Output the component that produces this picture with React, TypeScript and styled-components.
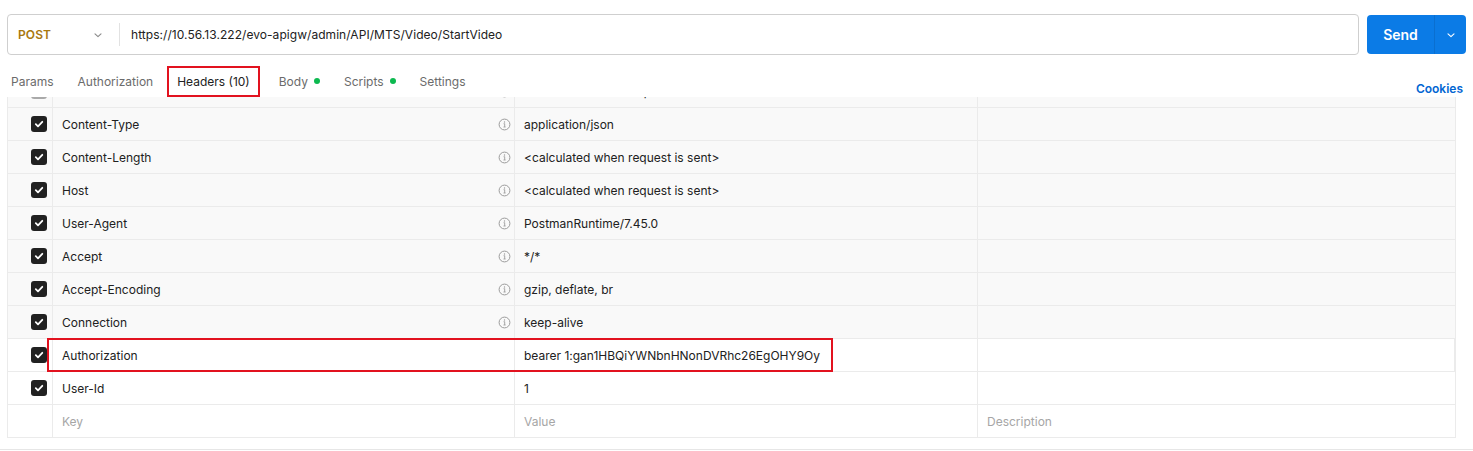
import React, { useLayoutEffect, useRef } from "react";
import styled, { createGlobalStyle } from "styled-components";

const Global = createGlobalStyle`
  html, body { margin: 0; padding: 0; background: #fff; }
  body { font-family: Inter, "Noto Sans", "Liberation Sans", sans-serif; color: #212121; -webkit-font-smoothing: antialiased; }
  * { box-sizing: border-box; }
`;

const Page = styled.div`
  width: 1473px;
  height: 451px;
  overflow: hidden;
  background: #fff;
  display: flex;
  flex-direction: column;
`;

const TopBar = styled.div`
  display: flex;
  align-items: center;
  gap: 8px;
  padding: 14px 7px 0 7px;
`;

const UrlBox = styled.div`
  flex: 1;
  height: 41px;
  border: 1px solid #cfcfcf;
  border-radius: 4px;
  display: flex;
  align-items: center;
`;

const Method = styled.div`
  width: 111px;
  padding-left: 10px;
  display: flex;
  align-items: center;
  justify-content: space-between;
  padding-right: 16px;
  font-size: 12px;
  font-weight: 600;
  color: #a8780f;
  letter-spacing: 0.1px;
`;

const Divider = styled.div`
  width: 1px;
  height: 23px;
  background: #e2e2e2;
`;

const UrlText = styled.div`
  padding-left: 11px;
  font-size: 12px;
  color: #212121;
  letter-spacing: 0.05px;
`;

const SendGroup = styled.div`
  display: flex;
  height: 39px;
  width: 99px;
  border-radius: 4px;
  background: #0b7be6;
  overflow: hidden;
`;

const SendButton = styled.div`
  width: 68px;
  display: flex;
  align-items: center;
  justify-content: center;
  color: #fff;
  font-size: 14px;
  font-weight: 600;
  border-right: 1px solid #0a6fd0;
`;

const SendArrow = styled.div`
  flex: 1;
  display: flex;
  align-items: center;
  justify-content: center;
`;

const TabRow = styled.div`
  display: flex;
  align-items: stretch;
  justify-content: space-between;
  margin-top: 11px;
  height: 31px;
  padding-left: 1px;
  padding-right: 10px;
`;

const Tabs = styled.div`
  display: flex;
  gap: 4px;
`;

const Tab = styled.div<{ $active?: boolean; $highlight?: boolean }>`
  display: flex;
  align-items: center;
  gap: 6px;
  padding: 0 8px 1px;
  margin-right: ${(p) => (p.$highlight ? "5px" : "0")};
  font-size: 12px;
  color: ${(p) => (p.$active ? "#212121" : "#6b6b6b")};
  border: 2px solid ${(p) => (p.$highlight ? "#e2121f" : "transparent")};
`;

const Dot = styled.span`
  width: 6px;
  height: 6px;
  border-radius: 50%;
  background: #0cb94f;
  display: inline-block;
`;

const Cookies = styled.div`
  align-self: flex-end;
  padding-bottom: 2px;
  font-size: 12px;
  font-weight: 600;
  color: #0265d2;
  margin-bottom: -1px;
`;

const TableViewport = styled.div`
  margin-left: 7px;
  width: 1449px;
  height: 341px;
  overflow: hidden;
`;

const Row = styled.div<{ $muted?: boolean }>`
  position: relative;
  display: grid;
  grid-template-columns: 45px 462px 463px 1fr;
  height: 33px;
  background: ${(p) => (p.$muted ? "#f9f9f9" : "#fff")};
  border-bottom: 1px solid #ebebeb;
  border-left: 1px solid #ebebeb;
  border-right: 1px solid #ebebeb;
`;

const CheckCell = styled.div`
  display: flex;
  align-items: center;
  justify-content: flex-end;
  padding-right: 5px;
  border-right: 1px solid #ebebeb;
`;

const Cell = styled.div<{ $placeholder?: boolean }>`
  display: flex;
  align-items: center;
  justify-content: space-between;
  padding: 0 3px 0 9px;
  font-size: 12px;
  color: ${(p) => (p.$placeholder ? "#a6a6a6" : "#212121")};
  border-right: 1px solid #ebebeb;
  &:last-child { border-right: none; }
`;

const Box = styled.div<{ $disabled?: boolean }>`
  width: 16px;
  height: 16px;
  border-radius: 3px;
  background: ${(p) => (p.$disabled ? "#a9a9a9" : "#212121")};
  display: flex;
  align-items: center;
  justify-content: center;
`;

const Highlight = styled.div`
  position: absolute;
  left: 39px;
  top: -1px;
  width: 786px;
  height: 34px;
  border: 2px solid #e2121f;
  pointer-events: none;
`;

const BottomLine = styled.div`
  margin-top: 11px;
  height: 1px;
  background: #e6e6e6;
`;

const Chevron = ({ color, size = 10 }: { color: string; size?: number }) => (
  <svg width={size} height={size} viewBox="0 0 10 10" fill="none">
    <path d="M2 3.8 L5 6.6 L8 3.8" stroke={color} strokeWidth="1.1" strokeLinecap="round" strokeLinejoin="round" />
  </svg>
);

const Info = () => (
  <svg width="13" height="13" viewBox="0 0 13 13" fill="none">
    <circle cx="6.5" cy="6.5" r="5.4" stroke="#9c9c9c" strokeWidth="1" />
    <circle cx="6.5" cy="4" r="0.7" fill="#9c9c9c" />
    <path d="M5.6 5.7 H6.7 V9 M5.5 9 H7.6" stroke="#9c9c9c" strokeWidth="0.9" />
  </svg>
);

const Check = () => (
  <svg width="10" height="10" viewBox="0 0 10 10" fill="none">
    <path d="M1.8 5.2 L4 7.3 L8.3 2.8" stroke="#fff" strokeWidth="1.8" strokeLinecap="round" strokeLinejoin="round" />
  </svg>
);

type H = { key: string; value: string; auto?: boolean; disabled?: boolean; highlight?: boolean };

const headers: H[] = [
  { key: "Postman-Token", value: "<calculated when request is sent>", auto: true, disabled: true },
  { key: "Content-Type", value: "application/json", auto: true },
  { key: "Content-Length", value: "<calculated when request is sent>", auto: true },
  { key: "Host", value: "<calculated when request is sent>", auto: true },
  { key: "User-Agent", value: "PostmanRuntime/7.45.0", auto: true },
  { key: "Accept", value: "*/*", auto: true },
  { key: "Accept-Encoding", value: "gzip, deflate, br", auto: true },
  { key: "Connection", value: "keep-alive", auto: true },
  { key: "Authorization", value: "bearer 1:gan1HBQiYWNbnHNonDVRhc26EgOHY9Oy", highlight: true },
  { key: "User-Id", value: "1" },
];

export default function App() {
  const vp = useRef<HTMLDivElement>(null);
  useLayoutEffect(() => {
    if (vp.current) vp.current.scrollTop = 22;
  }, []);
  return (
    <>
      <Global />
      <Page>
        <TopBar>
          <UrlBox>
            <Method>
              POST
              <Chevron color="#8a8a8a" />
            </Method>
            <Divider />
            <UrlText>https://10.56.13.222/evo-apigw/admin/API/MTS/Video/StartVideo</UrlText>
          </UrlBox>
          <SendGroup>
            <SendButton>Send</SendButton>
            <SendArrow>
              <Chevron color="#ffffff" />
            </SendArrow>
          </SendGroup>
        </TopBar>
        <TabRow>
          <Tabs>
            <Tab>Params</Tab>
            <Tab>Authorization</Tab>
            <Tab $active $highlight>Headers (10)</Tab>
            <Tab>Body <Dot /></Tab>
            <Tab>Scripts <Dot /></Tab>
            <Tab>Settings</Tab>
          </Tabs>
          <Cookies>Cookies</Cookies>
        </TabRow>
        <TableViewport ref={vp}>
          {headers.map((h) => (
            <Row key={h.key} $muted={h.auto}>
              <CheckCell>
                <Box $disabled={h.disabled}>
                  <Check />
                </Box>
              </CheckCell>
              <Cell>
                {h.key}
                {h.auto && <Info />}
              </Cell>
              <Cell>{h.value}</Cell>
              <Cell />
              {h.highlight && <Highlight />}
            </Row>
          ))}
          <Row>
            <CheckCell />
            <Cell $placeholder>Key</Cell>
            <Cell $placeholder>Value</Cell>
            <Cell $placeholder>Description</Cell>
          </Row>
        </TableViewport>
        <BottomLine />
      </Page>
    </>
  );
}
